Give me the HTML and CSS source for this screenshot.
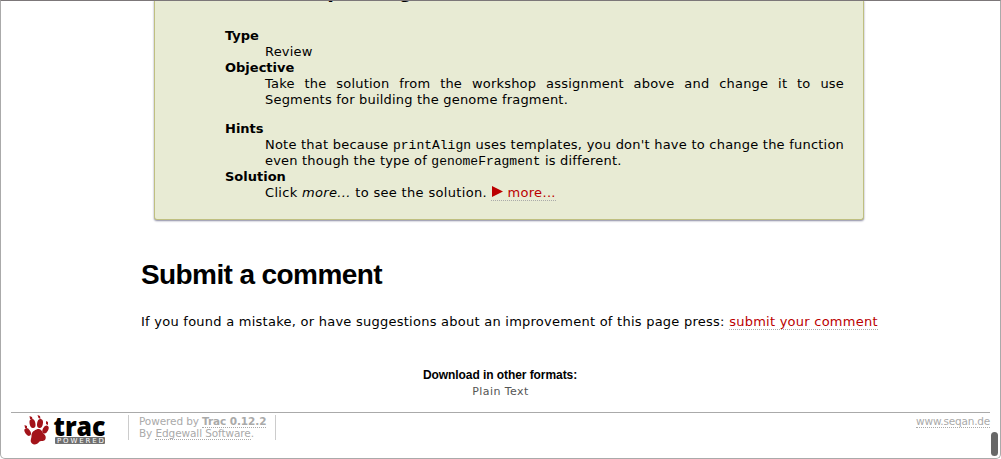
FILE: index.html
```
<!DOCTYPE html>
<html lang="en">
<head>
<meta charset="utf-8">
<title>Submit a comment</title>
<link rel="stylesheet" href="styles.css">
</head>
<body>
<div class="window">
  <main class="content">
    <section class="panel">
      <h3 class="panel-title">Workshop Assignment</h3>
      <dl class="assignment">
        <dt>Type</dt>
        <dd>Review</dd>
        <dt>Objective</dt>
        <dd class="gap"><span class="line full">Take the solution from the workshop assignment above and change it to use</span><span class="line">Segments for building the genome fragment.</span></dd>
        <dt>Hints</dt>
        <dd><span class="line full">Note that because <code>printAlign</code> uses templates, you don't have to change the function</span><span class="line">even though the type of <code>genomeFragment</code> is different.</span></dd>
        <dt>Solution</dt>
        <dd class="solution">Click <em>more...</em> to see the solution. <a class="link"><svg class="arrow" viewBox="0 0 11 11"><path d="M0 0L11 5.5L0 11Z"/></svg>more...</a></dd>
      </dl>
    </section>
    <h1>Submit a comment</h1>
    <p class="feedback">If you found a mistake, or have suggestions about an improvement of this page press: <a class="link">submit your comment</a></p>
  </main>
  <section class="formats">
    <h3>Download in other formats:</h3>
    <a>Plain Text</a>
  </section>
  <footer class="footer">
    <svg class="logo" viewBox="0 0 84 32" width="84" height="32">
      <g fill="#a3131a">
        <path d="M12.500 14.500C15.500 13 18 15 19 18C20.500 19.500 22.500 21 21.500 24C20 27 17.500 25.500 15.500 26.500C13.500 29.500 10 30.500 8 28.500C5.500 26 7.500 24 7.500 21C7.500 17.500 9 16 12.500 14.500Z"/>
        <ellipse cx="8.500" cy="8.500" rx="2.900" ry="4.500" transform="rotate(-12 8.500 8.500)"/>
        <ellipse cx="16" cy="8.500" rx="2.900" ry="4.500" transform="rotate(10 16 8.500)"/>
        <ellipse cx="3.700" cy="17" rx="2.600" ry="4.200" transform="rotate(-35 3.700 17)"/>
        <ellipse cx="21.500" cy="14.500" rx="2.700" ry="4.200" transform="rotate(28 21.500 14.500)"/>
        <path d="M5.500 1L8 2L8.500 4L6 4ZM13.500 0L16 1L16.500 4L14.500 3ZM.500 10L3 11L3 13L1 13ZM22 6L24 7L24 10L22 9Z"/>
      </g>
      <text class="brand" x="29.500" y="20.500" textLength="52" lengthAdjust="spacingAndGlyphs">trac</text>
      <rect x="31" y="22" width="50" height="7" rx="1" fill="#707070"/>
      <text class="powered" x="33" y="28" textLength="47">POWERED</text>
    </svg>
    <p class="left">Powered by <a><b>Trac 0.12.2</b></a><br>By <a>Edgewall Software</a>.</p>
    <p class="right"><a>www.seqan.de</a></p>
  </footer>
  <div class="scroll-thumb"></div>
</div>
</body>
</html>
```
FILE: styles.css
```
* { box-sizing: border-box; }
body { margin: 0; background: #fff; color: #000; font: 13px/16px "DejaVu Sans", Verdana, sans-serif; }
h1, h3, p, dl, dd { margin: 0; }
.window { position: relative; width: 1001px; height: 459px; overflow: hidden; border: 1px solid #aaa; border-top-color: #7c7779; border-radius: 0 0 5px 5px; }
.content { padding: 0 113px 0 140px; height: 346px; white-space: nowrap; }
.panel { width: 710px; height: 220px; margin: -1px 0 0 13px; border: solid #bfbf80; border-width: 0 1px 1px; border-radius: 0 0 3px 3px; background: #e8ebd4; box-shadow: 0 1px 2px #8888a0; padding: 0 19px 0 70px; }
.panel-title { height: 28px; font: bold 24px/24px "Liberation Sans", Arial, sans-serif; position: relative; top: -23px; }
dt { font-weight: bold; }
dd { margin-left: 40px; letter-spacing: .2px; }
.solution { letter-spacing: .33px; }
.gap { padding-bottom: 13px; }
.line { display: block; }
.full { text-align-last: justify; }
code { font: 13px/12px "Liberation Mono", monospace; letter-spacing: 0; }
.link { color: #b00; border-bottom: 1px dotted #aaa; }
.arrow { width: 11px; height: 11px; margin: 0 4px 0 1px; fill: #b00; }
h1 { margin-top: 38px; font: bold 28px/33px "Liberation Sans", Arial, sans-serif; letter-spacing: -.6px; }
.feedback { margin-top: 23px; letter-spacing: .25px; }
.formats { height: 66px; padding-top: 21px; text-align: center; font-size: 11px; letter-spacing: .45px; color: #555; }
.formats h3 { font: bold 12px/17px "Liberation Sans", Arial, sans-serif; letter-spacing: -.07px; margin-right: 1px; color: #000; }
.footer { display: flex; height: 45px; margin: 0 10px; border-top: 1px solid #aaa; color: #aaa; font-size: 10.500px; line-height: 12px; padding-top: 2px; }
.footer a { border-bottom: 1px dotted #aaa; }
.logo { flex: none; margin-left: 13px; overflow: visible; }
.brand { font: 800 27px "Open Sans", sans-serif; fill: #000; }
.powered { font: 7px "DejaVu Sans", sans-serif; fill: #fff; }
.left { margin-left: 20px; width: 148px; height: 25px; padding: 0 10px; border: solid #ccc; border-width: 0 1px; white-space: nowrap; letter-spacing: -.1px; }
.right { margin-left: auto; letter-spacing: -.2px; }
.scroll-thumb { position: absolute; right: 2px; bottom: 2px; width: 7px; height: 24px; border-radius: 4px; background: #686868; }
```
